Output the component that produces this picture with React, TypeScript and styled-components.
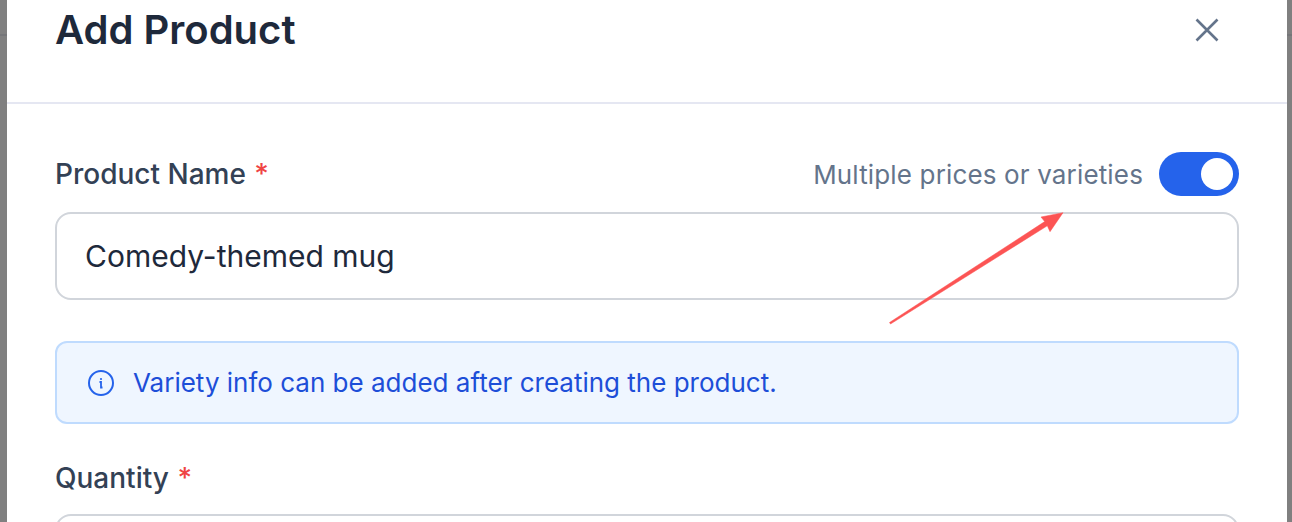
import React from "react";
import styled, { createGlobalStyle } from "styled-components";

const GlobalStyle = createGlobalStyle`
  html, body {
    margin: 0;
    padding: 0;
    height: 522px;
    overflow: hidden;
    background: #7f7f7f;
    font-family: Inter, "Liberation Sans", sans-serif;
  }
`;

const Backdrop = styled.div`
  position: relative;
  height: 522px;
  overflow: hidden;
  padding: 0 5px 0 7px;
  background: linear-gradient(#808080 34px, #757679 34px, #757679 36px, #808080 36px);
`;

const Modal = styled.div`
  height: 522px;
  background: #fff;
  overflow: hidden;
`;

const Header = styled.header`
  height: 104px;
  box-sizing: border-box;
  border-bottom: 2px solid #e5e7f2;
  padding: 0 66px 0 48px;
  display: flex;
  justify-content: space-between;
  align-items: flex-start;
`;

const Title = styled.h1`
  margin: 6px 0 0;
  font-size: 40px;
  line-height: 48px;
  font-weight: 600;
  color: #1e293b;
`;

const CloseButton = styled.button`
  border: 0;
  background: none;
  padding: 0;
  margin-top: 16px;
  width: 28px;
  height: 28px;
  color: #64748b;
  svg {
    display: block;
  }
`;

const Body = styled.div`
  padding: 48px 48px 0;
`;

const LabelRow = styled.div<{ $gap: number }>`
  display: flex;
  justify-content: space-between;
  align-items: center;
  height: 44px;
  margin-bottom: ${(p) => p.$gap}px;
`;

const Label = styled.label`
  font-size: 28px;
  line-height: 44px;
  font-weight: 500;
  color: #334155;
`;

const Star = styled.span`
  color: #ef4444;
  margin-left: 1px;
`;

const VarietyToggle = styled.div`
  display: flex;
  align-items: center;
  gap: 16px;
  font-size: 26px;
  letter-spacing: 0.15px;
  font-weight: 400;
  color: #64748b;
`;

const Toggle = styled.div`
  width: 80px;
  height: 44px;
  box-sizing: border-box;
  border-radius: 22px;
  background: #2563eb;
  padding: 6px 6px 6px 42px;
`;

const Knob = styled.div`
  width: 32px;
  height: 32px;
  border-radius: 50%;
  background: #fff;
`;

const InputBox = styled.div`
  height: 88px;
  box-sizing: border-box;
  border: 2px solid #d1d5db;
  border-radius: 16px;
  padding: 0 28px;
  display: flex;
  align-items: center;
  font-size: 30px;
  color: #1e293b;
`;

const Notice = styled.div`
  margin-top: 41px;
  height: 83px;
  box-sizing: border-box;
  border: 2px solid #bfdbfe;
  border-radius: 12px;
  background: #eff6ff;
  padding: 0 31px;
  display: flex;
  align-items: center;
  gap: 19px;
  font-size: 26px;
  color: #1d4ed8;
  svg {
    flex: none;
  }
`;

const QuantityField = styled.div`
  margin-top: 32px;
`;

const Arrow = styled.svg`
  position: absolute;
  left: 880px;
  top: 205px;
`;

export default function App() {
  return (
    <>
      <GlobalStyle />
      <Backdrop>
        <Modal>
          <Header>
            <Title>Add Product</Title>
            <CloseButton aria-label="Close">
              <svg width="28" height="28" viewBox="0 0 28 28" fill="none" stroke="currentColor" strokeWidth="2.6">
                <path d="M3.5 3.5 24.5 24.5M24.5 3.5 3.5 24.5" />
              </svg>
            </CloseButton>
          </Header>
          <Body>
            <LabelRow $gap={16}>
              <Label>
                Product Name <Star>*</Star>
              </Label>
              <VarietyToggle>
                Multiple prices or varieties
                <Toggle>
                  <Knob />
                </Toggle>
              </VarietyToggle>
            </LabelRow>
            <InputBox>Comedy-themed mug</InputBox>
            <Notice>
              <svg width="26" height="26" viewBox="0 0 26 26" fill="none" stroke="#2563eb">
                <circle cx="13" cy="13" r="12" strokeWidth="2" />
                <path d="M11.5 12H13V17.5H14.5" strokeWidth="1.8" />
                <circle cx="13" cy="9" r="1.1" fill="#2563eb" stroke="none" />
              </svg>
              Variety info can be added after creating the product.
            </Notice>
            <QuantityField>
              <LabelRow $gap={14}>
                <Label>
                  Quantity <Star>*</Star>
                </Label>
              </LabelRow>
              <InputBox />
            </QuantityField>
          </Body>
        </Modal>
        <Arrow width="190" height="125" viewBox="0 0 190 125">
          <path
            d="M9.5 117.5 L164.7 16.6 L161 12 L183 7.7 L170 26.7 L167.3 20.8 L10.5 119 Z"
            fill="#fc5454"
            stroke="#fc5454"
            strokeWidth="0.5"
          />
        </Arrow>
      </Backdrop>
    </>
  );
}
